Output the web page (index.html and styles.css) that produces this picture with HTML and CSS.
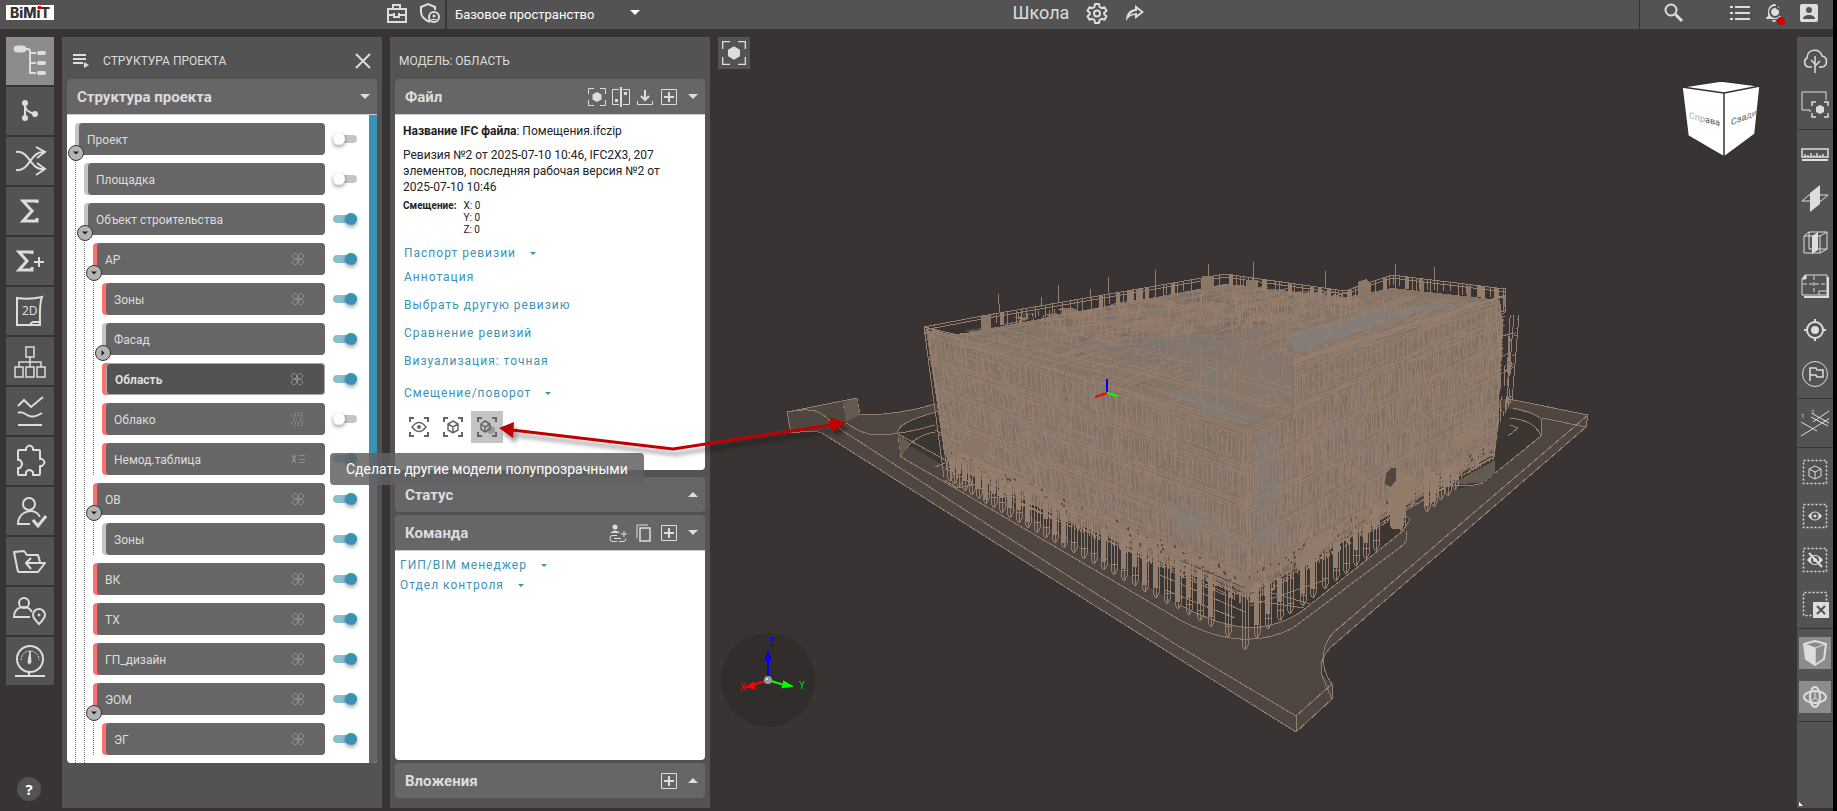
FILE: index.html
```html
<!DOCTYPE html>
<html lang="ru">
<head>
  <meta charset="utf-8">
  <title>BIMIT - Школа</title>
  <link rel="stylesheet" href="styles.css">
</head>
<body>
  <svg class="sprite" aria-hidden="true">
    <symbol id="i-clover" viewBox="0 0 14 14"><path d="M6.500 6.500H3.500L1.500 5V3L3 1.500h2L6.500 3zM7.500 6.500h3L12.500 5V3L11 1.500H9L7.500 3zM6.500 7.500H3.500L1.500 9v2L3 12.500h2L6.500 11zM7.500 7.500h3L12.500 9v2L11 12.500H9L7.500 11z"/></symbol>
    <symbol id="i-cloud" viewBox="0 0 14 14"><path stroke-width="1.500" stroke-dasharray="1.500 2" d="M3 1h9M0 3.500h14M2 6h4M9 6h4M2 8.500h4M9 8.500h4M0 11h14M3 13.500h9"/></symbol>
    <symbol id="i-table" viewBox="0 0 14 14"><path stroke-width="1.500" d="M1 3l4 8M5 3L1 11"/><path d="M8 3.500h6M8 7.500h6M8 10.500h6"/></symbol>
    <symbol id="i-down" viewBox="0 0 10 5"><path d="M0 0h10L5 5z" fill="currentColor" stroke="none"/></symbol>
    <symbol id="i-up" viewBox="0 0 10 5"><path d="M0 5h10L5 0z" fill="currentColor" stroke="none"/></symbol>
    <symbol id="i-plus" viewBox="0 0 18 18"><path d="M1.500 1.500h15v15h-15z"/><path stroke-width="2" d="M9 4v10M4 9h10"/></symbol>
    <symbol id="i-focus" viewBox="0 0 18 18"><path d="M.5 6V.5H6M12 .5h5.500V6M17.500 12v5.500H12M6 17.500H.5V12"/><path fill="currentColor" stroke="none" d="M9 4l4.500 2.500v5L9 14l-4.500-2.500v-5z"/></symbol>
  </svg>

  <div class="app">
    <header class="topbar">
      <a class="logo" href="#">BiM<span class="logo-i">i</span>T</a>
      <div class="top-tools">
        <button class="icon-btn" title="Портфель"><svg width="22" height="22" viewBox="0 0 22 22"><path stroke-width="2" d="M2 7h18v13H2zM7 7V3h7v4M2 13h6M13 13h7M8 11v4h5v-4"/></svg></button>
        <button class="icon-btn" title="Доступ"><svg width="22" height="22" viewBox="0 0 22 22"><path stroke-width="2" d="M11 20C6 18 2 15 2 10V5l7-3 7 3v3"/><circle cx="15" cy="15" r="5" stroke-width="2"/><circle cx="15" cy="14" r="1.500" fill="currentColor" stroke="none"/><path d="M12.500 17.500h5"/></svg></button>
      </div>
      <div class="space-box">
        <select class="space-select" aria-label="Пространство"><option>Базовое пространство</option></select>
        <svg class="space-caret" width="10" height="5"><use href="#i-down"/></svg>
      </div>
      <div class="project">
        <h1 class="project-name">Школа</h1>
        <button class="icon-btn" title="Настройки"><svg width="22" height="22" viewBox="0 0 22 22"><path stroke-width="2" stroke-linejoin="round" d="M9 2h4l.6 3 2 1.200 2.900-1 2 3.500-2.300 2v1.600l2.300 2-2 3.500-2.900-1-2 1.200-.6 3H9l-.6-3-2-1.200-2.900 1-2-3.500 2.300-2v-1.600l-2.300-2 2-3.500 2.900 1 2-1.200z"/><circle cx="11" cy="11.500" r="3" stroke-width="2"/></svg></button>
        <button class="icon-btn" title="Поделиться"><svg width="20" height="20" viewBox="0 0 20 20"><path fill="currentColor" stroke="none" fill-rule="evenodd" d="M1 18C1 11 4 7 10 6V2l9 7-9 7v-4c-4 0-7 2-9 6zM12 6v2c-4 0-6 2-7 4 2-1 4-2 7-2v2l4-3z"/></svg></button>
      </div>
      <div class="top-right">
        <button class="icon-btn search" title="Поиск"><svg width="20" height="20" viewBox="0 0 20 20"><circle cx="7" cy="7" r="5.500" stroke-width="2"/><path stroke-width="3" d="M11.500 11.500L18 18"/></svg></button>
        <button class="icon-btn" title="Задачи"><svg width="20" height="18" viewBox="0 0 20 18"><path stroke-width="2" d="M5 3h15M5 9h15M5 15h15M0 3h3M0 9h3M0 15h3"/></svg></button>
        <button class="icon-btn bell" title="Уведомления"><svg width="20" height="20" viewBox="0 0 20 20"><path fill="currentColor" stroke="none" d="M9 1a2 2 0 0 1 2 1c3 1 4 4 4 7v4l2 2v1H1v-1l2-2V9c0-3 1-6 4-7a2 2 0 0 1 2-1zM7 17h4a2 2 0 0 1-4 0z"/><path class="bell-cut" stroke-width="2" d="M11 4a5 5 0 1 0 4 4M12 0v5l4 3"/></svg><span class="badge"></span></button>
        <button class="icon-btn" title="Профиль"><svg width="18" height="18" viewBox="0 0 18 18"><path fill="currentColor" stroke="none" fill-rule="evenodd" d="M2 0h14a2 2 0 0 1 2 2v14a2 2 0 0 1-2 2H2a2 2 0 0 1-2-2V2a2 2 0 0 1 2-2zM9 3a3 3 0 1 0 0 6 3 3 0 0 0 0-6zM3 15h12c0-3-3-4-6-4s-6 1-6 4z"/></svg></button>
      </div>
    </header>

    <main class="workspace">
      <nav class="rail">
        <button class="rail-btn active" title="Структура"><svg viewBox="0 0 36 36"><rect x="2" y="3" width="12" height="6" rx="3" fill="currentColor"/><path stroke-width="2" d="M12 6h4q2 0 2 3v21h6M18 10h6M18 20h6"/><g fill="currentColor" stroke="none"><rect x="25" y="8" width="9" height="4" rx="2"/><rect x="25" y="18" width="9" height="4" rx="2"/><rect x="25" y="28" width="9" height="4" rx="2"/></g></svg></button>
        <button class="rail-btn" title="Ревизии"><svg viewBox="0 0 36 36"><g fill="currentColor" stroke="none"><circle cx="13" cy="10" r="3"/><circle cx="13" cy="25" r="3"/><circle cx="23" cy="21" r="3"/></g><path stroke-width="2" d="M13 10v15M13 12c0 5 5 8 10 9"/></svg></button>
        <button class="rail-btn" title="Связи"><svg viewBox="0 0 36 36"><path stroke-width="2" d="M4 9c14-2 14 19 28 17M4 27c14 2 14-19 28-18M24 4l9 5-8 6M25 20l8 6-9 6"/></svg></button>
        <button class="rail-btn" title="Сумма"><svg viewBox="0 0 36 36"><path stroke-width="3" d="M25 10V8H11l9 10-9 10h14v-3"/></svg></button>
        <button class="rail-btn" title="Сумма плюс"><svg viewBox="0 0 36 36"><path stroke-width="3" d="M20 11V9H7l8 9-8 9h13v-3"/><path stroke-width="2" d="M22 19h10M27 14v10"/></svg></button>
        <button class="rail-btn" title="Чертежи"><svg viewBox="0 0 36 36"><path stroke-width="2" d="M5 5c8 1 16 1 25-1-3 8-2 19-2 28H5zM18 31l3-2h8"/><text x="10" y="22" class="icon-text">2D</text></svg></button>
        <button class="rail-btn" title="Схема"><svg viewBox="0 0 36 36"><path stroke-width="1.500" d="M14 4h8v10h-8zM3 24h8v10H3zM14 24h8v10h-8zM25 24h8v10h-8zM18 14v10M7 24v-5h22v5"/></svg></button>
        <button class="rail-btn" title="Графики"><svg viewBox="0 0 36 36"><path stroke-width="2" d="M6 13l6-6 7 7L31 4M6 20c7-5 8 10 24 0M6 32h24"/></svg></button>
        <button class="rail-btn" title="Плагины"><svg viewBox="0 0 36 36"><path stroke-width="2" stroke-linejoin="round" d="M7 7h7V5q4-5 7 0v2h6q1 0 1 1v8h2q5 3 0 7h-2v8q0 1-1 1h-6v-3q-4-4-7 0v3H7q-1 0-1-1v-6h2q4-4 0-8H6V8q0-1 1-1z"/></svg></button>
        <button class="rail-btn" title="Проверка"><svg viewBox="0 0 36 36"><circle cx="17" cy="11" r="6" stroke-width="2"/><path stroke-width="2" d="M18 31H6c0-14 18-17 22-7"/><path stroke-width="3" d="M21 27l5 6 8-10"/></svg></button>
        <button class="rail-btn" title="Файлы"><svg viewBox="0 0 36 36"><path stroke-width="2" stroke-linejoin="round" d="M6 29L2 9l10-1 3 4h11l2 7M6 29h20l7-9h-9M26 20H15M19 15l-5 5 5 6"/></svg></button>
        <button class="rail-btn" title="Люди"><svg viewBox="0 0 36 36"><circle cx="12" cy="10" r="5" stroke-width="2"/><path stroke-width="2" d="M18 24H2c0-11 13-13 18-5"/><path stroke-width="2" d="M27 31c-4-4-6-7-6-9a6 6 0 0 1 12 0c0 2-2 5-6 9z"/><circle cx="27" cy="22" r="1" fill="currentColor"/></svg></button>
        <button class="rail-btn" title="Панель"><svg viewBox="0 0 36 36"><circle cx="18" cy="16" r="13" stroke-width="2"/><path stroke-dasharray="2 1" d="M9 17a9 9 0 0 1 18 0"/><path fill="currentColor" d="M18 8l-2 11q1 4 3 0z"/><path stroke-width="2" d="M3 33h30M17 29v4"/></svg></button>
        <button class="help" title="Помощь">?</button>
      </nav>

      <section class="panel">
        <div class="panel-head">
          <svg class="panel-menu" width="16" height="16" viewBox="0 0 16 16"><path stroke-width="2" d="M0 2h13M0 6h13M0 10h10"/><path fill="currentColor" stroke="none" d="M11 9l5 3-5 3z"/></svg>
          <h2 class="panel-title">СТРУКТУРА ПРОЕКТА</h2>
          <button class="icon-btn close" title="Закрыть"><svg width="16" height="16" viewBox="0 0 16 16"><path stroke-width="2" d="M1 1l14 14M15 1L1 15"/></svg></button>
        </div>
        <div class="section-head">
          <h3 class="section-title">Структура проекта</h3>
          <button class="icon-btn" title="Свернуть"><svg width="10" height="5"><use href="#i-down"/></svg></button>
        </div>
        <div class="tree-body">
          <ul class="tree">
            <li>
              <div class="row"><button class="node"><span>Проект</span></button><button class="expander" title="Свернуть"><svg width="6" height="4"><use href="#i-down"/></svg></button><input class="switch" type="checkbox" aria-label="Проект"></div>
              <ul>
                <li><div class="row"><button class="node"><span>Площадка</span></button><input class="switch" type="checkbox" aria-label="Площадка"></div></li>
                <li>
                  <div class="row"><button class="node"><span>Объект строительства</span></button><button class="expander" title="Свернуть"><svg width="6" height="4"><use href="#i-down"/></svg></button><input class="switch" type="checkbox" checked aria-label="Объект строительства"></div>
                  <ul class="tail">
                    <li>
                      <div class="row"><button class="node red"><span>АР<svg><use href="#i-clover"/></svg></span></button><button class="expander" title="Свернуть"><svg width="6" height="4"><use href="#i-down"/></svg></button><input class="switch" type="checkbox" checked aria-label="АР"></div>
                      <ul>
                        <li><div class="row"><button class="node red"><span>Зоны<svg><use href="#i-clover"/></svg></span></button><input class="switch" type="checkbox" checked aria-label="Зоны"></div></li>
                        <li><div class="row"><button class="node"><span>Фасад</span></button><button class="expander closed" title="Развернуть"><svg width="6" height="4"><use href="#i-down"/></svg></button><input class="switch" type="checkbox" checked aria-label="Фасад"></div></li>
                        <li><div class="row"><button class="node red selected"><span>Область<svg><use href="#i-clover"/></svg></span></button><input class="switch" type="checkbox" checked aria-label="Область"></div></li>
                        <li><div class="row"><button class="node red"><span>Облако<svg><use href="#i-cloud"/></svg></span></button><input class="switch" type="checkbox" aria-label="Облако"></div></li>
                        <li><div class="row"><button class="node red"><span>Немод.таблица<svg><use href="#i-table"/></svg></span></button><input class="switch" type="checkbox" checked aria-label="Немод.таблица"></div></li>
                      </ul>
                    </li>
                    <li>
                      <div class="row"><button class="node red"><span>ОВ<svg><use href="#i-clover"/></svg></span></button><button class="expander" title="Свернуть"><svg width="6" height="4"><use href="#i-down"/></svg></button><input class="switch" type="checkbox" checked aria-label="ОВ"></div>
                      <ul>
                        <li><div class="row"><button class="node"><span>Зоны</span></button><input class="switch" type="checkbox" checked aria-label="Зоны ОВ"></div></li>
                      </ul>
                    </li>
                    <li><div class="row"><button class="node red"><span>ВК<svg><use href="#i-clover"/></svg></span></button><input class="switch" type="checkbox" checked aria-label="ВК"></div></li>
                    <li><div class="row"><button class="node red"><span>ТХ<svg><use href="#i-clover"/></svg></span></button><input class="switch" type="checkbox" checked aria-label="ТХ"></div></li>
                    <li><div class="row"><button class="node red"><span>ГП_дизайн<svg><use href="#i-clover"/></svg></span></button><input class="switch" type="checkbox" checked aria-label="ГП_дизайн"></div></li>
                    <li>
                      <div class="row"><button class="node red"><span>ЭОМ<svg><use href="#i-clover"/></svg></span></button><button class="expander" title="Свернуть"><svg width="6" height="4"><use href="#i-down"/></svg></button><input class="switch" type="checkbox" checked aria-label="ЭОМ"></div>
                      <ul>
                        <li><div class="row"><button class="node red"><span>ЭГ<svg><use href="#i-clover"/></svg></span></button><input class="switch" type="checkbox" checked aria-label="ЭГ"></div></li>
                      </ul>
                    </li>
                  </ul>
                </li>
              </ul>
            </li>
          </ul>
          <div class="scrollbar"><div class="thumb"></div></div>
        </div>
      </section>

      <section class="panel">
        <div class="panel-head">
          <h2 class="panel-title">МОДЕЛЬ: ОБЛАСТЬ</h2>
        </div>
        <div class="section-head">
          <h3 class="section-title">Файл</h3>
          <button class="icon-btn" title="Фокус"><svg width="18" height="18"><use href="#i-focus"/></svg></button>
          <button class="icon-btn" title="Сравнить"><svg width="18" height="20" viewBox="0 0 18 20"><path d="M7 2.500H.5v15H7M11 2.500h6.500v15H11"/><path stroke-width="2" d="M9 0v20"/><path fill="currentColor" stroke="none" d="M3 12h3v3H3zM12 5h3v3h-3z"/></svg></button>
          <button class="icon-btn" title="Скачать"><svg width="18" height="18" viewBox="0 0 18 18"><path stroke-width="2" d="M9 2v10M5 8l4 4 4-4"/><path d="M1.500 13v3.500h15V13"/></svg></button>
          <button class="icon-btn" title="Добавить"><svg width="18" height="18"><use href="#i-plus"/></svg></button>
          <button class="icon-btn" title="Свернуть"><svg width="10" height="5"><use href="#i-down"/></svg></button>
        </div>
        <div class="section-body file-body">
          <p><b>Название IFC файла</b>: Помещения.ifczip</p>
          <p class="revision">Ревизия №2 от 2025-07-10 10:46, IFC2X3, 207 элементов, последняя рабочая версия №2 от 2025-07-10 10:46</p>
          <div class="shift"><b>Смещение:</b><div>X: 0<br>Y: 0<br>Z: 0</div></div>
          <button class="link first">Паспорт ревизии<svg width="6" height="3"><use href="#i-down"/></svg></button>
          <button class="link">Аннотация</button>
          <button class="link">Выбрать другую ревизию</button>
          <button class="link">Сравнение ревизий</button>
          <button class="link">Визуализация: точная</button>
          <button class="link last">Смещение/поворот<svg width="6" height="3"><use href="#i-down"/></svg></button>
          <div class="view-btns">
            <button title="Показать"><svg viewBox="0 0 20 20"><path stroke-width="2" d="M1 5V1h4M15 1h4v4M19 15v4h-4M5 19H1v-4"/><path stroke-width="1.500" d="M3 10q7-9 14 0-7 9-14 0z"/><circle cx="10" cy="10" r="2" fill="currentColor" stroke="none"/></svg></button>
            <button title="Изолировать"><svg viewBox="0 0 20 20"><path stroke-width="2" d="M1 5V1h4M15 1h4v4M19 15v4h-4M5 19H1v-4"/><path stroke-width="1.500" d="M10 4l5 3v6l-5 3-5-3V7zM5 7l5 3 5-3M10 10v6"/></svg></button>
            <button class="on" title="Полупрозрачные" aria-describedby="tip"><svg viewBox="0 0 20 20"><path stroke-width="2" d="M1 5V1h4M15 1h4v4M19 15v4h-4M5 19H1v-4"/><circle cx="14" cy="13" r="4" fill="#999" stroke="none"/><path stroke-width="1.500" d="M8 4l5 3v5l-5 3-4-3V7zM4 7l4 3 5-3M8 10v5"/></svg></button>
          </div>
        </div>
        <div class="section-head closed">
          <h3 class="section-title">Статус</h3>
          <button class="icon-btn" title="Развернуть"><svg width="10" height="5"><use href="#i-up"/></svg></button>
        </div>
        <div class="section-head">
          <h3 class="section-title">Команда</h3>
          <button class="icon-btn wide" title="Назначить"><svg width="18" height="18" viewBox="0 0 18 18"><circle cx="6" cy="3" r="2.500" fill="currentColor" stroke="none"/><path fill="currentColor" stroke="none" d="M1 9q5-5 10 0z"/><path d="M8 11.500H3q-2 0-2 3t2 3h5M10 17.500h4q3 0 3-3M5 14.500h7M15 7v6M12 10h6"/></svg></button>
          <button class="icon-btn wide" title="Копировать"><svg width="16" height="18" viewBox="0 0 16 18"><path d="M1 14V1h11"/><path stroke-width="1.500" d="M4 4h10v13H4z"/></svg></button>
          <button class="icon-btn" title="Добавить"><svg width="18" height="18"><use href="#i-plus"/></svg></button>
          <button class="icon-btn" title="Свернуть"><svg width="10" height="5"><use href="#i-down"/></svg></button>
        </div>
        <div class="section-body team-body">
          <button class="link">ГИП/BIM менеджер<svg width="6" height="3"><use href="#i-down"/></svg></button>
          <button class="link">Отдел контроля<svg width="6" height="3"><use href="#i-down"/></svg></button>
        </div>
        <div class="section-head closed">
          <h3 class="section-title">Вложения</h3>
          <button class="icon-btn" title="Добавить"><svg width="18" height="18"><use href="#i-plus"/></svg></button>
          <button class="icon-btn" title="Развернуть"><svg width="10" height="5"><use href="#i-up"/></svg></button>
        </div>
      </section>

      <section class="viewport">
        <svg id="scene" class="scene" viewBox="718 37 1079 771" preserveAspectRatio="xMidYMid slice" shape-rendering="crispEdges">
          <!-- site slab -->
          <g class="slab">
            <path d="M787 412L857 398L860 415Q895 415 935 404L1509 399 1588 415 1586 427 1330 648Q1318 661 1322 675L1332 684V699L1296 732 1149 640 822 433 810 431 791 433z"/>
            <path class="line" d="M787 412Q813 407 822 414L843 431 965 510 1175 644 1296 716 1332 684Q1323 673 1323 656 1325 641 1333 633L1588 415 1509 399M1586 427L1588 415M1586 427L1330 648Q1318 661 1322 675L1332 699V684M1296 716V732L1332 699M1296 732L1149 640 822 433Q813 430 791 433L787 412 857 398M1542 418L1586 427"/>
          </g>
          <!-- pit around the building -->
          <path class="pit" d="M940 411Q894 423 898 434L900 440 1180 605Q1236 635 1270 625 1290 621 1306 608L1403 531 1410 519 1392 503 1485 483 1541 436 1542 420Q1522 406 1462 405z"/>
          <path class="line" d="M940 411Q894 423 898 434L901 457 960 491 1180 620Q1243 654 1293 628L1403 545Q1409 539 1406 531M898 434L960 468M1180 605Q1236 635 1270 625 1290 621 1306 608L1403 531 1410 519 1390 507M1513 408Q1539 414 1542 420L1541 436 1483 483Q1463 489 1435 483M857 398L860 415Q900 415 935 404M846 423Q864 435 876 435 901 435 935 425M901 457Q911 436 935 432M1510 425L1518 428 1508 436M1510 418Q1535 420 1541 436M843 403Q843 415 859 416"/>
          <path class="curb" d="M843 403L857 398 860 415 846 422zM898 434L910 443 901 457zM1452 484L1495 460V474L1483 483z"/>
          <g id="building"></g>
          <path d="M1107 393v-14" stroke="#0000ff" stroke-width="2"/>
          <path d="M1107 393l-12 4" stroke="#ff0000" stroke-width="2"/>
          <path d="M1107 393l11 3" stroke="#00ff00" stroke-width="2"/>
        </svg>
        <button class="focus-btn" title="Показать всё"><svg width="24" height="24" viewBox="0 0 18 18"><use href="#i-focus"/></svg></button>
        <svg class="view-cube" width="84" height="80" viewBox="0 0 84 80">
          <path fill="#fff" stroke="#333" stroke-width="1.500" stroke-linejoin="round" d="M2 8l39-6 39 5-36 7zM2 8l42 6v64L8 57zM44 14l36-7-5 48-31 23z"/>
          <text class="cube-text" x="9" y="37" transform="skewY(14)">Спр<tspan class="near">ава</tspan></text>
          <text class="cube-text near" x="51" y="67" transform="skewY(-22)">Сза<tspan class="far">ди</tspan></text>
        </svg>
        <svg class="gizmo" width="94" height="94" viewBox="0 0 94 94">
          <circle cx="47" cy="47" r="47" fill="#312d2c" stroke="none"/>
          <g stroke-width="2">
            <path stroke="#0000ff" fill="#0000ff" d="M47 47V27l-2 0 2-7 2 7h-2"/>
            <path stroke="#ff0000" fill="#ff0000" d="M47 47l-15 5v-2l-6 4 7 1-1-3"/>
            <path stroke="#00ff00" fill="#00ff00" d="M47 47l16 5v-3l7 4-8 1 1-2"/>
          </g>
          <circle cx="47" cy="47" r="4" fill="#999" stroke="none"/>
          <circle cx="46" cy="46" r="1" fill="#fff" stroke="none"/>
          <text class="axis axis-z" x="47" y="13">Z</text>
          <text class="axis axis-x" x="19" y="58">X</text>
          <text class="axis axis-y" x="78" y="56">Y</text>
        </svg>
      </section>

      <aside class="toolbar">
        <div class="group">
          <button title="Окружение"><svg viewBox="0 0 28 28"><path stroke-width="1.500" d="M14 26V9M14 17l-4-4M14 19l5-5M11 20H7a5 5 0 0 1-1-9C6 1 20 1 21 9c6 1 6 10 0 11h-3"/></svg></button>
          <button title="Изолировать"><svg viewBox="0 0 28 28"><path d="M9 21v-2H1V1h24v8"/><path stroke-width="1.500" d="M11 15v-4h4M23 11h4v4M27 22v4h-4M15 26h-4v-4"/><path fill="currentColor" stroke="none" d="M19 14l4 2v5l-4 2-4-2v-5z"/></svg></button>
        </div>
        <div class="group">
          <button title="Линейка"><svg viewBox="0 0 28 28"><path stroke-width="1.500" d="M1 9h26v8H1zM4 17v-3M7 17v-2M10 17v-4M13 17v-2M16 17v-4M19 17v-2M22 17v-3"/><path stroke-width="2" d="M1 20h26"/></svg></button>
          <button title="Сечение"><svg viewBox="0 0 28 28"><path d="M1 17l7-6h19l-7 6z"/><path fill="currentColor" stroke="none" d="M9 9l10-8v19L9 28z"/></svg></button>
          <button title="Объём"><svg viewBox="0 0 28 28"><path d="M3 8h16v17H3zM8 4h18v17M3 8l5-4M19 8l7-4M19 25l7-4M8 4v17h18"/><path fill="currentColor" stroke="none" d="M11 8l6-4v18l-6 4z"/></svg></button>
          <button title="Лист"><svg viewBox="0 0 28 28"><path d="M4 3h22v20H1V7zM18 23v-4h8"/><path stroke-dasharray="4 2" d="M13 4v18M2 12h24"/><path fill="currentColor" d="M1 7l4-4v4z"/><path stroke-width="2" d="M3 25h24V5"/></svg></button>
          <button title="Центр"><svg viewBox="0 0 28 28"><circle cx="14" cy="14" r="8" stroke-width="2"/><circle cx="14" cy="14" r="4" fill="currentColor" stroke="none"/><path stroke-width="2" d="M14 3v4M14 21v4M3 14h4M21 14h4"/></svg></button>
          <button title="Метка"><svg viewBox="0 0 28 28"><circle cx="14" cy="14" r="12.500"/><path stroke-width="1.500" d="M9 21V8h6l1 2h6v7h-6l-1-2H9"/></svg></button>
        </div>
        <div class="group">
          <button title="Оси"><svg viewBox="0 0 28 28"><path d="M0 13l16 9M10 8l17 9M0 27L29 9M12 13L28 2M12 5l16 9"/><text x="0" y="9" class="tiny">1</text><text x="10" y="5" class="tiny">2</text></svg></button>
        </div>
        <div class="group">
          <button title="Выбранное"><svg viewBox="0 0 28 28"><path stroke-width="1.500" stroke-dasharray="2 2" d="M2.500 2.500h23v23h-23z"/><path d="M14 8l6 3v7l-6 3-6-3v-7zM8 11l6 3 6-3M14 14v7"/></svg></button>
          <button title="Показать"><svg viewBox="0 0 28 28"><path stroke-width="1.500" stroke-dasharray="2 2" d="M2.500 2.500h23v23h-23z"/><path fill="currentColor" stroke="none" d="M7 14q7-9 14 0-7 9-14 0z"/><circle cx="14" cy="14" r="2.500" class="eye-ring"/></svg></button>
          <button title="Скрыть"><svg viewBox="0 0 28 28"><path stroke-width="1.500" stroke-dasharray="2 2" d="M2.500 2.500h23v23h-23z"/><path fill="currentColor" stroke="none" d="M6 14q8-10 16 0-8 10-16 0z"/><circle cx="14" cy="14" r="3" class="eye-ring"/><path stroke-width="2" d="M8 7l13 14"/></svg></button>
          <button title="Сбросить"><svg viewBox="0 0 28 28"><path stroke-width="1.500" stroke-dasharray="2 2" d="M2.500 25.500v-23h23v23z"/><path fill="currentColor" stroke="none" d="M12 12h16v16H12z"/><path class="eye-ring" d="M16 16l8 8M24 16l-8 8"/></svg></button>
        </div>
        <div class="group">
          <button class="on" title="Куб"><svg viewBox="0 0 28 28"><path stroke-width="2" stroke-linejoin="round" d="M3 5l11-3 11 3-2 15-9 6-9-6z"/><path fill="currentColor" d="M3 5l11 4v17l-9-6z"/><path d="M3 5l11 4 11-4M14 9v17"/></svg></button>
          <button class="on" title="Вращение"><svg viewBox="0 0 28 28"><ellipse cx="14" cy="14" rx="11" ry="6" stroke-width="2"/><ellipse cx="14" cy="14" rx="5" ry="10" stroke-width="2"/><path d="M14 9v6l-4 3M14 15l4 3"/></svg></button>
        </div>
        <span class="corner"></span>
      </aside>
    </main>

    <div class="tooltip" id="tip" role="tooltip">Сделать другие модели полупрозрачными</div>
    <svg class="callout" width="370" height="60" viewBox="490 410 370 60">
      <path stroke="#c00000" stroke-width="3" d="M512 430l161 19 158-24"/>
      <path fill="#c00000" stroke="none" d="M499 428l15-6-1 16zM846 423l-17-6 3 15z"/>
    </svg>
  </div>
  <script src="scene.js"></script>
</body>
</html>
```
FILE: styles.css
```css
* { box-sizing: border-box; }
body {
  margin: 0;
  background: #000;
  font-family: Roboto, "Noto Sans", sans-serif;
  font-size: 12px;
  line-height: 16px;
  color: #ddd;
}
h1, h2, h3, p, ul { margin: 0; padding: 0; }
ul { list-style: none; }
button {
  border: 0;
  padding: 0;
  background: none;
  color: inherit;
  font: inherit;
  cursor: pointer;
}
svg {
  fill: none;
  stroke: currentColor;
  flex: none;
  display: block;
}
svg text { stroke: none; fill: currentColor; }
.sprite { position: absolute; width: 0; height: 0; }
.app {
  position: relative;
  display: flex;
  flex-direction: column;
  height: 100vh;
  margin-right: 4px;
  background: #393433;
  overflow: hidden;
}

/* top bar */
.topbar {
  display: flex;
  height: 29px;
  flex: none;
  background: #535353;
}
.logo {
  width: 48px;
  height: 15px;
  margin: 5px 0 0 6px;
  background: #fff;
  color: #333;
  font: 800 14px/15px Inter, sans-serif;
  text-align: center;
  text-decoration: none;
}
.logo-i { position: relative; }
.logo-i::after {
  content: "";
  position: absolute;
  left: 1px;
  top: 2px;
  width: 3px;
  height: 3px;
  background: #e00000;
}
.top-tools {
  display: flex;
  gap: 11px;
  align-items: center;
  width: 59px;
  margin-left: 332px;
  padding-bottom: 4px;
}
.space-box {
  position: relative;
  width: 206px;
  border-left: 2px solid #393433;
}
.space-select {
  appearance: none;
  width: 100%;
  height: 29px;
  padding: 0 8px;
  border: 0;
  background: none;
  color: #fff;
  font: 13px Roboto, sans-serif;
}
.space-caret { position: absolute; right: 11px; top: 10px; color: #fff; pointer-events: none; }
.project {
  display: flex;
  flex: 1;
  justify-content: center;
  align-items: center;
  gap: 17px;
  padding: 0 132px 3px 0;
}
.project-name { font-size: 18px; line-height: 24px; font-weight: 400; }
.top-right {
  display: flex;
  align-items: center;
  gap: 15px;
  width: 194px;
  padding: 0 15px 4px 24px;
  border-left: 1px solid #333;
}
.search { margin-right: auto; }
.bell { position: relative; }
.bell-cut { stroke: #535353; }
.badge {
  position: absolute;
  right: 0;
  bottom: -2px;
  width: 8px;
  height: 8px;
  border-radius: 50%;
  background: #d00000;
}
.icon-btn { display: flex; align-items: center; justify-content: center; }

/* layout */
.workspace {
  display: flex;
  flex: 1;
  min-height: 0;
  padding: 8px 0 3px 6px;
}
.rail {
  display: flex;
  flex-direction: column;
  align-items: center;
  gap: 2px;
  width: 48px;
}
.rail-btn {
  display: grid;
  place-items: center;
  width: 48px;
  height: 48px;
  background: #535353;
}
.rail-btn svg { width: 36px; height: 36px; }
.rail-btn.active { background: #8c8c8c; }
.icon-text { font: 12px "Noto Sans", sans-serif; }
.help {
  width: 24px;
  height: 24px;
  margin: auto 2px 7px 0;
  border-radius: 50%;
  background: #535353;
  color: #fff;
  font: bold 15px "Noto Sans", sans-serif;
}

/* panels */
.panel {
  display: flex;
  flex-direction: column;
  width: 320px;
  margin-left: 8px;
  padding: 0 5px 10px;
  background: #535353;
}
.panel-head {
  display: flex;
  align-items: center;
  height: 42px;
  flex: none;
  padding: 6px 6px 0 4px;
}
.panel-menu { margin: 0 14px 0 2px; }
.panel-title { font-size: 12px; font-weight: 400; }
.close { margin-left: auto; }
.section-head {
  display: flex;
  align-items: center;
  height: 36px;
  flex: none;
  padding-left: 10px;
  border-bottom: 1px solid #ccc;
  border-radius: 4px 4px 0 0;
  background: #666;
}
.section-head.closed { height: 35px; border: 0; border-radius: 4px; margin-bottom: 3px; }
.section-head.closed:last-child { margin-bottom: 0; }
.section-head .icon-btn { width: 24px; height: 24px; }
.section-head .icon-btn.wide { width: 26px; }
.section-title { flex: 1; font-size: 15px; line-height: 20px; font-weight: 700; }
.section-body {
  background: #fff;
  color: #222;
  border-radius: 0 0 4px 4px;
}

/* tree */
.tree-body {
  display: flex;
  background: #fff;
  border-radius: 0 0 4px 4px;
  overflow: hidden;
}
.tree { flex: 1; padding-left: 8px; }
.tree ul { border-left: 1px dotted #777; padding-left: 8px; }
.tree .tail { padding-bottom: 8px; }
.row {
  position: relative;
  display: flex;
  align-items: center;
  gap: 8px;
  padding: 8px 12px 0 0;
}
.node {
  flex: 1;
  height: 32px;
  padding-left: 4px;
  border-radius: 4px;
  background: #c4c4c4;
  text-align: left;
}
.node.red { background: #ff7070; }
.node span {
  display: flex;
  align-items: center;
  justify-content: space-between;
  height: 32px;
  padding: 2px 20px 0 8px;
  border-radius: 4px;
  background: #666;
}
.node svg { width: 14px; height: 14px; margin-bottom: 2px; color: #8c8c8c; }
.node.selected span {
  border: 1px solid #aaa;
  background: #535353;
  font-weight: 700;
}
.expander {
  position: absolute;
  left: -7px;
  bottom: -6px;
  z-index: 1;
  display: grid;
  place-items: center;
  width: 16px;
  height: 16px;
  border: 1px solid #333;
  border-radius: 50%;
  background: #b4b4b4;
  color: #222;
}
.expander.closed svg { transform: rotate(-90deg); }
.switch {
  appearance: none;
  position: relative;
  width: 24px;
  height: 8px;
  margin: 0;
  border-radius: 4px;
  background: #c4c4c4;
}
.switch::after {
  content: "";
  position: absolute;
  left: 0;
  top: -2px;
  width: 12px;
  height: 12px;
  border-radius: 50%;
  background: #fff;
  box-shadow: 0 2px 4px rgba(0, 0, 0, 0.4);
}
.switch:checked { background: #89bed1; }
.switch:checked::after { left: 12px; background: #3b93b3; }
.scrollbar { width: 8px; background: #666; }
.thumb { height: 57%; background: #3b93b3; }

/* model panel */
.file-body { padding: 8px 8px 27px; margin-bottom: 7px; }
.file-body p { margin-bottom: 8px; }
.file-body .revision { margin-bottom: 5px; padding-right: 30px; }
.shift { display: flex; gap: 7px; font-size: 10px; line-height: 12px; }
.link {
  display: flex;
  align-items: center;
  gap: 14px;
  height: 28px;
  padding-left: 1px;
  color: #3b93b3;
  letter-spacing: 1px;
}
.link.first { height: 20px; margin-top: 7px; }
.link.last { height: 36px; }
.view-btns { display: flex; gap: 2px; color: #666; }
.view-btns button {
  display: grid;
  place-items: center;
  width: 32px;
  height: 32px;
}
.view-btns svg { width: 20px; height: 20px; }
.view-btns .on { background: #c4c4c4; }
.team-body { flex: 1; padding: 4px; margin-bottom: 3px; }
.team-body .link { height: 20px; }

/* 3d view */
.viewport {
  position: relative;
  flex: 1;
  min-width: 0;
  margin-left: 8px;
}
.scene { position: absolute; width: 100%; height: 100%; }
.slab { fill: #504641; stroke: none; }
.line { fill: none; stroke: #967e6e; }
.pit { fill: #3c3633; stroke: none; }
.curb { fill: #655a50; stroke: none; }
.focus-btn {
  position: relative;
  display: grid;
  place-items: center;
  width: 32px;
  height: 32px;
  background: #535353;
}
.view-cube { position: absolute; right: 33px; top: 42px; }
.cube-text { font: 9px Roboto, sans-serif; fill: #aaa; }
.cube-text.near, .cube-text .near { fill: #555; }
.cube-text .far { fill: #888; }
.gizmo { position: absolute; left: 3px; bottom: 81px; }
.axis { font: 10px "DejaVu Sans Mono", monospace; }
svg .axis-z { fill: #0000ff; }
svg .axis-x { fill: #ff0000; }
svg .axis-y { fill: #00d000; }
.toolbar {
  position: relative;
  width: 36px;
  background: #535353;
}
.group { padding: 2px 0; border-bottom: 1px solid #393433; }
.group button {
  display: grid;
  place-items: center;
  width: 32px;
  height: 32px;
  margin: 6px 2px 12px;
}
.group button:last-child { margin-bottom: 6px; }
.group svg { width: 28px; height: 28px; }
.group .on { background: #8c8c8c; }
.eye-ring { stroke: #535353; stroke-width: 2; }
.tiny { font: 6px Roboto, sans-serif; }
.corner {
  position: absolute;
  left: 2px;
  bottom: 2px;
  border: 2px solid transparent;
  border-left-color: #fff;
  border-bottom-color: #fff;
}

/* overlays */
.tooltip {
  position: absolute;
  left: 330px;
  top: 453px;
  z-index: 2;
  padding: 6px 16px;
  border-radius: 4px;
  background: rgba(97, 97, 97, 0.85);
  color: #fff;
  font-size: 14px;
  line-height: 20px;
}
.callout {
  position: absolute;
  left: 490px;
  top: 410px;
  z-index: 2;
  pointer-events: none;
  filter: drop-shadow(3px 5px 2px rgba(0, 0, 0, 0.4));
}
```
FILE: scene.js
```js
// Wireframe of the school building
const NS = 'http://www.w3.org/2000/svg';
const building = document.getElementById('building');

let seed = 7;
function rnd() {
  seed = (seed * 16807) % 2147483647;
  return seed / 2147483647;
}

function add(d, stroke, fill, opacity) {
  const path = document.createElementNS(NS, 'path');
  path.setAttribute('d', d);
  path.setAttribute('stroke', stroke || 'none');
  path.setAttribute('fill', fill || 'none');
  path.setAttribute('opacity', opacity || 1);
  building.appendChild(path);
}

// point on a quad [tl, tr, br, bl]
function at(q, u, v) {
  const x = (1 - v) * ((1 - u) * q[0][0] + u * q[1][0]) + v * ((1 - u) * q[3][0] + u * q[2][0]);
  const y = (1 - v) * ((1 - u) * q[0][1] + u * q[1][1]) + v * ((1 - u) * q[3][1] + u * q[2][1]);
  return x.toFixed(1) + ' ' + y.toFixed(1);
}

function rect(q, u, v, a, b) {
  return `M${at(q, u, v)}L${at(q, a, v)}L${at(q, a, b)}L${at(q, u, b)}z`;
}

function patches(q, count, w, h, color, opacity) {
  let d = '';
  for (let i = 0; i < count; i++) {
    const u = rnd() * (1 - w), v = rnd() * (1 - h);
    d += rect(q, u, v, u + w * (0.3 + rnd() * 0.7), v + h * (0.3 + rnd() * 0.7));
  }
  add(d, null, color, opacity);
}

function strokes(q, count, len, vertical, color, opacity) {
  let d = '';
  for (let i = 0; i < count; i++) {
    const u = rnd(), v = rnd(), l = len * (0.3 + rnd());
    d += vertical
      ? `M${at(q, u, v)}L${at(q, u, Math.min(1, v + l))}`
      : `M${at(q, u, v)}L${at(q, Math.min(1, u + l), v)}`;
  }
  add(d, color, null, opacity);
}

// window bays, floor by floor
function bays(q, cols, rows) {
  let frame = '', pane = '';
  for (let r = 0; r < rows; r++) {
    for (let c = 0; c < cols; c++) {
      const u = (c + 0.15 + rnd() * 0.2) / cols, a = u + (0.35 + rnd() * 0.25) / cols;
      const v = (r + 0.28) / rows, b = (r + 0.85) / rows;
      frame += rect(q, u, v, a, b);
      if (rnd() > 0.3) pane += rect(q, u, v, a, b);
    }
  }
  add(pane, null, '#7d7066', 0.45);
  add(frame, '#967e6e');
}

function floors(q, rows) {
  let d = '';
  for (let i = 0; i <= rows; i++) {
    for (const k of [0, 0.02, 0.05]) {
      const v = Math.min(1, i / rows + k);
      d += `M${at(q, 0, v)}L${at(q, 1, v)}`;
    }
  }
  add(d, '#967e6e');
}

const LIGHT = '#967e6e', MID = '#887568', DARK = '#6f6258', GLASS = '#847c77', HOLE = '#3d3734';
const left = [[924, 327], [1247, 430], [1247, 575], [944, 446]];
const right = [[1247, 430], [1505, 310], [1498, 436], [1247, 575]];
const upper = [[1295, 360], [1505, 295], [1505, 325], [1295, 405]];
const roof = [[945, 334], [1225, 284], [1490, 302], [1247, 430]];
const east = [[1500, 313], [1519, 315], [1511, 402], [1496, 430]];

// solid mass
add('M926 330L958 335 981 330 1225 284 1345 297 1392 288 1500 300 1503 330 1497 440 1462 470 1400 496 1247 590 1140 546 1060 506 944 452z', null, MID, 0.98);

// roof levels
patches(roof, 60, 0.12, 0.1, GLASS, 0.35);
patches(roof, 50, 0.1, 0.05, DARK, 0.3);
strokes(roof, 300, 0.16, false, LIGHT, 0.8);
strokes(roof, 140, 0.1, true, LIGHT, 0.6);
// far wing: cluttered band behind the courtyard
const far = [[1000, 312], [1340, 286], [1380, 310], [1090, 350]];
patches(far, 60, 0.08, 0.14, '#917a6a', 0.9);
patches(far, 24, 0.05, 0.1, DARK, 0.5);
// courtyard glazing
add('M1120 345L1180 332 1290 352V388L1180 362z', null, '#837870', 0.7);
add('M1190 352L1292 376V400L1250 425 1190 405z', null, '#87776a');
add('M1200 360L1232 368V402L1200 392zM1240 386L1275 374 1292 380V398z', null, '#83796f', 0.9);
add('M1160 392L1240 424 1262 418 1180 390z', null, '#837a75', 0.9);
add('M1200 356v44M1216 360v46M1234 366v44M1237 380L1292 394M1250 395h26l3 10h-24zM1258 395v10M1268 395v10', LIGHT);
// near right roof plane
add('M1282 335L1380 308 1480 302 1420 312 1296 352z', null, GLASS);
add('M1280 330L1362 308M1284 338L1380 310M1296 358L1498 298M1296 362L1498 302M1296 366L1498 307M1280 330V350L1296 358', LIGHT);
add('M1322 325l8-2 4 2-8 2zM1350 330l8-2 4 2-8 2zM1375 322l8-2 4 2-8 2zM1400 313l8-2 4 2-8 2z', null, LIGHT);
// near left ledge
add('M955 338L1100 372 1247 418M960 333L1110 366 1290 412M958 343L1247 424M1010 330L1180 380 1290 408M1040 325L1160 355 1292 388', LIGHT);
let posts = '';
for (let i = 0; i < 460; i++) {
  const p = at(i % 2 ? far : roof, rnd(), rnd() * 0.8).split(' ');
  posts += `M${p[0]} ${p[1]}v${(4 + rnd() * 10).toFixed(0)}`;
}
add(posts, LIGHT);
let slots = '';
for (let i = 0; i < 46; i++) {
  const x = 1095 + rnd() * 120, y = 335 + rnd() * 34;
  slots += `M${x.toFixed(0)} ${y.toFixed(0)}l${(8 + rnd() * 14).toFixed(0)} 3`;
}
add(slots, '#7b7570');

// facades
for (const wall of [left, right, upper]) {
  const n = wall === upper ? 0.25 : 1;
  patches(wall, 60 * n, 0.05, 0.16, DARK, 0.15);
  patches(wall, 40 * n, 0.06, 0.14, GLASS, 0.4);
  bays(wall, wall === upper ? 20 : 30, wall === upper ? 1 : 4);
  strokes(wall, 620 * n, 0.14, true, LIGHT, 0.8);
  strokes(wall, 90 * n, 0.1, false, LIGHT, 0.8);
  strokes(wall, 120 * n, 0.05, true, DARK, 0.45);
}
floors(left, 4);
floors(right, 4);
floors(upper, 1);
patches([[1252, 440], [1292, 422], [1292, 545], [1252, 566]], 14, 0.8, 0.2, GLASS, 0.5);
patches([[1165, 495], [1245, 526], [1245, 570], [1165, 536]], 12, 0.3, 0.5, GLASS, 0.5);
strokes(east, 26, 0.3, true, LIGHT, 1);
strokes(east, 12, 1, false, LIGHT, 1);
add('M924 327l20 150M928 327l20 150M1247 430v170M1250 430v170M1243 430v160M1295 358v60M1299 358v60M1505 288v24M1503 288v24M1519 315l-7 86M1514 315l-7 86', LIGHT);

// parapet
add('M924 327L982 316 1225 274 1345 291 1368 283 1392 275 1505 289M924 330L982 319 1225 277 1345 294 1392 278 1505 292M924 327L958 335 980 331', LIGHT);
let rail = '', panels = '';
for (let x = 982; x < 1500; x += 3 + rnd() * 7) {
  const y = x < 1225 ? 316 - (x - 982) * 0.173 : x < 1345 ? 274 + (x - 1225) * 0.142 : x < 1392 ? 291 - (x - 1345) * 0.34 : 275 + (x - 1392) * 0.124;
  rail += `M${x.toFixed(0)} ${y.toFixed(0)}v${(9 + rnd() * 5).toFixed(0)}`;
  if (rnd() > 0.6) panels += `M${x.toFixed(0)} ${y.toFixed(0)}h4v12h-4z`;
}
add(rail, LIGHT);
add(panels, null, LIGHT);
add('M981 315h10v18h-10zM1202 276h12v14h-12zM1246 280h12v10h-12zM1358 282l8-3 4 4v14h-12zM1420 282h4v12h-4zM1467 286h4v12h-4z', null, '#8c7767');
add('M998 294l2 19M1041 297v10M1058 285l1 18M1090 289v10M1108 277l1 16M1155 270l1 15M1208 264v12M1253 262v18M1325 271v18M1395 264v26M1435 267l-1 24', LIGHT);

// basement
const plinthL = [[944, 446], [1247, 575], [1247, 606], [950, 474]];
const plinthR = [[1247, 575], [1497, 436], [1495, 458], [1247, 606]];
add('M942 446L1247 575V598L1160 562 950 466zM1247 575L1497 436 1495 454 1247 598z', null, '#8c7767', 0.85);
for (const q of [plinthL, plinthR]) {
  strokes(q, 240, 0.5, true, LIGHT, 1);
  strokes(q, 60, 0.15, false, LIGHT, 1);
  patches(q, 130, 0.008, 0.12, HOLE, 0.7);
}
add('M1180 560L1245 588M1184 566L1245 594M1250 594L1300 568', '#544943');
add('M935 430l40 20-30 20M938 434l70 30M935 467l30-12 40 20M945 480l12 8 20-4', LIGHT);

// piles: x, bottom y, length
const piles = [[1228, 636, 54], [1245, 649, 62], [1257, 637, 54], [1268, 628, 46], [1280, 620, 42],
  [1290, 613, 42], [1303, 605, 42], [1313, 597, 40], [1325, 588, 38], [1336, 580, 38], [1346, 573, 38],
  [1356, 565, 36], [1366, 558, 34], [1376, 550, 44], [1393, 528, 30], [1402, 531, 50], [1427, 511, 44],
  [1434, 506, 34], [1441, 499, 30], [1448, 495, 28], [1455, 489, 24]];
for (let i = 0; i < 30; i++) {
  const t = i / 29;
  piles.push([950 + 261 * Math.pow(t, 1.25), 480 + 146 * Math.pow(t, 1.18), 24 + 28 * t]);
}
let d = '', solid = '';
for (const [px, py, len] of piles) {
  const x = Math.round(px), y = Math.round(py);
  d += `M${x - 3} ${y - len}V${y - 4}l2 4h2l2-4V${y - len}M${x} ${y - len}v${len}M${x - 3} ${y - 10}h6`;
  if (rnd() > 0.35) solid += `M${x - 3} ${y - len}h5v${Math.round(len * (0.5 + rnd() * 0.4))}h-5z`;
}
add(d, LIGHT);
add(solid, null, LIGHT);
add('M1160 575L1245 612M1165 590L1235 618M1250 600L1304 608M1262 590L1310 604M1250 606L1325 580', LIGHT);

// entrance stairs and trees
add('M1392 470l24 6-2 20-8 10-3 24-12-2-2-30zM1296 560l24-26 16 2-20 22-18 12zM1450 440l30-14 4 8-26 16z', null, '#917b6b');
add('M1386 474l5-6h5v12l-5 7-6-3z', null, '#504641');
add('M962 445l12-7 16 4-6 14-14 2z', null, '#8a7566');
```
